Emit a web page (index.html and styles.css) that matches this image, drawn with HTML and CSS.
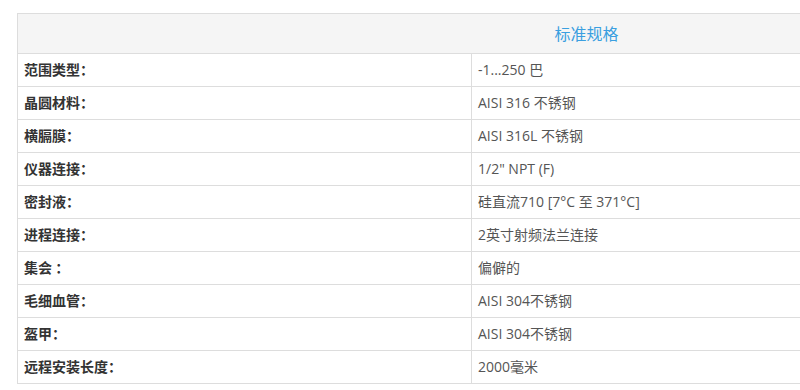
FILE: index.html
```html
<!DOCTYPE html>
<html lang="zh">
<head>
<meta charset="utf-8">
<title>标准规格</title>
<link rel="stylesheet" href="styles.css">
</head>
<body>
<div class="frame">
<table class="spec">
  <colgroup>
    <col class="col-label">
    <col class="col-value">
  </colgroup>
  <thead>
    <tr><th colspan="2" class="head">标准规格</th></tr>
  </thead>
  <tbody>
    <tr><td class="label">范围类型：</td><td class="value">-1...250 巴</td></tr>
    <tr><td class="label">晶圆材料：</td><td class="value">AISI 316 不锈钢</td></tr>
    <tr><td class="label">横膈膜：</td><td class="value">AISI 316L 不锈钢</td></tr>
    <tr><td class="label">仪器连接：</td><td class="value">1/2" NPT (F)</td></tr>
    <tr><td class="label">密封液：</td><td class="value">硅直流710 [7°C 至 371°C]</td></tr>
    <tr><td class="label">进程连接：</td><td class="value">2英寸射频法兰连接</td></tr>
    <tr><td class="label">集会 ：</td><td class="value">偏僻的</td></tr>
    <tr><td class="label">毛细血管：</td><td class="value">AISI 304不锈钢</td></tr>
    <tr><td class="label">盔甲：</td><td class="value">AISI 304不锈钢</td></tr>
    <tr><td class="label">远程安装长度：</td><td class="value">2000毫米</td></tr>
  </tbody>
</table>
</div>
</body>
</html>
```
FILE: styles.css
```css
html, body {
  margin: 0;
  padding: 0;
  background: #ffffff;
}

body {
  font-family: "Open Sans", "Noto Sans CJK SC", sans-serif;
  font-size: 14px;
}

.frame {
  width: 800px;
  height: 390px;
  overflow: hidden;
  padding: 13px 0 0 17px;
  box-sizing: border-box;
}

.spec {
  border-collapse: collapse;
  table-layout: fixed;
  width: 1138px;
}

.col-label {
  width: 454px;
}

.col-value {
  width: 684px;
}

.spec th,
.spec td {
  border: 1px solid #dddddd;
  padding: 0 6px 2px;
  vertical-align: middle;
}

.head {
  height: 37px;
  background: #f5f5f5;
  color: #3a9fe0;
  font-family: "Noto Sans CJK SC", sans-serif;
  font-weight: normal;
  font-size: 16px;
  text-align: center;
}

.spec td {
  height: 30px;
}

.label {
  color: #333333;
  font-family: "Noto Sans CJK SC", sans-serif;
  font-weight: bold;
  font-size: 14px;
}

.value {
  color: #555555;
  font-size: 14px;
}
```
